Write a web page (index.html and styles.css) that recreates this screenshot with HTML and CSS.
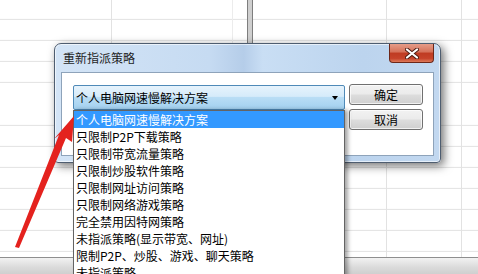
FILE: index.html
```html
<!DOCTYPE html>
<html lang="zh-CN">
<head>
  <meta charset="UTF-8" />
  <meta name="viewport" content="width=device-width, initial-scale=1.0" />
  <title>重新指派策略</title>
  <link rel="stylesheet" href="styles.css">
</head>
<body>
  <div class="sheet"></div>
  <div class="sheet-bar"></div>

  <div class="dialog">
    <div class="titlebar">
      <span class="title">重新指派策略</span>
      <span class="close-btn">
        <svg width="14" height="11" viewBox="0 0 14 11">
          <path d="M2 1.5 L12 9.5 M12 1.5 L2 9.5" stroke="#4a1a10" stroke-width="4" stroke-linecap="round"/>
          <path d="M2 1.5 L12 9.5 M12 1.5 L2 9.5" stroke="#fff" stroke-width="2.2" stroke-linecap="round"/>
        </svg>
      </span>
    </div>
    <div class="client">
      <div class="combo">
        <span class="combo-text">个人电脑网速慢解决方案</span>
        <span class="combo-arrow"></span>
      </div>
      <div class="buttons">
        <button class="btn">确定</button>
        <button class="btn">取消</button>
      </div>
    </div>
  </div>

  <ul class="droplist">
    <li class="selected">个人电脑网速慢解决方案</li>
    <li>只限制P2P下载策略</li>
    <li>只限制带宽流量策略</li>
    <li>只限制炒股软件策略</li>
    <li>只限制网址访问策略</li>
    <li>只限制网络游戏策略</li>
    <li>完全禁用因特网策略</li>
    <li>未指派策略(显示带宽、网址)</li>
    <li>限制P2P、炒股、游戏、聊天策略</li>
    <li>未指派策略</li>
  </ul>

  <svg class="arrow" width="80" height="140" viewBox="0 0 80 140">
    <polygon points="74,2 72,28 66,24 19,134 15,133 59,21 54,25" fill="#e4221e"/>
  </svg>
</body>
</html>
```

FILE: styles.css
```css
html, body {
  margin: 0;
  padding: 0;
}
body {
  width: 478px;
  height: 274px;
  overflow: hidden;
  position: relative;
  display: flex;
  flex-direction: column;
  font-family: "Noto Sans CJK SC", "Noto Sans", sans-serif;
  font-size: 12px;
  color: #000;
  background: #fff;
}

/* spreadsheet behind the dialog */
.sheet {
  flex: 1;
  background-color: #fff;
  background-image:
    linear-gradient(to right, transparent 247px, #7e7e7e 247px, #7e7e7e 248px, #cfcfcf 248px, #cfcfcf 252px, #7e7e7e 252px, #7e7e7e 253px, transparent 253px),
    linear-gradient(to right, transparent 111px, #e2e2e2 111px, #e2e2e2 112px, transparent 112px, transparent 232px, #ececec 232px, #ececec 233px, transparent 233px, transparent 386px, #e2e2e2 386px, #e2e2e2 387px, transparent 387px, transparent 461px, #e2e2e2 461px, #e2e2e2 462px, transparent 462px),
    repeating-linear-gradient(to bottom, transparent 0, transparent 20.1px, #e2e2e2 20.1px, #e2e2e2 21.1px);
  background-position: 0 0, 0 0, 0 -1.1px;
}
.sheet-bar {
  height: 16px;
  border-top: 1px solid #8e8e8e;
  background: linear-gradient(to bottom, #f2f2f2, #dadada 60%, #cfcfcf);
}

/* dialog window */
.dialog {
  position: absolute;
  left: 54px;
  top: 43px;
  width: 385px;
  height: 118px;
  border: 1px solid #4e5d70;
  border-radius: 7px 7px 4px 4px;
  background: linear-gradient(to right, #d3e4f6 0%, #c6dbf2 40%, #b5cde9 49%, #c9def4 54%, #bcd4ee 80%, #c2d8f0 100%);
  box-shadow: 3px 3px 10px rgba(0, 0, 0, 0.55), inset 0 0 0 1px rgba(255, 255, 255, 0.6);
  display: flex;
  flex-direction: column;
}
.titlebar {
  height: 28px;
  display: flex;
  align-items: flex-start;
  justify-content: space-between;
}
.title {
  margin: 6px 0 0 8px;
  line-height: 16px;
  color: #1e1e1e;
}
.close-btn {
  width: 43px;
  height: 18px;
  margin-right: 6px;
  border: 1px solid #6d2719;
  border-top: none;
  border-radius: 0 0 4px 4px;
  background: linear-gradient(to bottom, #e59c88 0%, #d57159 45%, #bf3b22 50%, #c6432a 80%, #dd7a5a 100%);
  display: flex;
  align-items: center;
  justify-content: center;
}
.client {
  flex: 1;
  margin: 0 6px 6px 6px;
  border: 1px solid #8ea3ba;
  background: #fff;
  display: flex;
  align-items: flex-start;
  padding: 11px 10px 0 11px;
}

/* combobox */
.combo {
  width: 270px;
  height: 23px;
  margin-top: 1px;
  border: 1px solid #4f8ab8;
  border-radius: 2px;
  background: linear-gradient(to bottom, #e6f3fc 0%, #d6ebfa 45%, #b9ddf5 50%, #a3d1ef 100%);
  display: flex;
  align-items: center;
  justify-content: space-between;
}
.combo-text {
  padding-left: 2px;
  line-height: 16px;
}
.combo-arrow {
  width: 0;
  height: 0;
  margin-right: 6px;
  border-left: 3.5px solid transparent;
  border-right: 3.5px solid transparent;
  border-top: 4px solid #000;
}
.buttons {
  margin-left: 4px;
  display: flex;
  flex-direction: column;
  gap: 4px;
}
.btn {
  width: 74px;
  height: 21px;
  padding: 0;
  border: 1px solid #707070;
  border-radius: 3px;
  background: linear-gradient(to bottom, #f2f2f2 0%, #ebebeb 48%, #dddddd 52%, #cfcfcf 100%);
  box-shadow: inset 0 0 0 1px rgba(255, 255, 255, 0.7);
  font-family: "Noto Sans CJK SC", sans-serif;
  font-size: 12px;
  line-height: 16px;
  color: #000;
}

/* dropped list */
.droplist {
  position: absolute;
  left: 73px;
  top: 110px;
  width: 270px;
  margin: 0;
  padding: 0;
  list-style: none;
  background: #fff;
  border: 1px solid #646464;
  border-bottom: none;
  box-shadow: 3px 0 4px rgba(0, 0, 0, 0.35);
}
.droplist li {
  height: 17px;
  line-height: 17px;
  padding-left: 2px;
  white-space: nowrap;
}
.droplist li.selected {
  background: #3399ff;
  color: #fff;
}

.arrow {
  position: absolute;
  left: 0;
  top: 114px;
}
```
